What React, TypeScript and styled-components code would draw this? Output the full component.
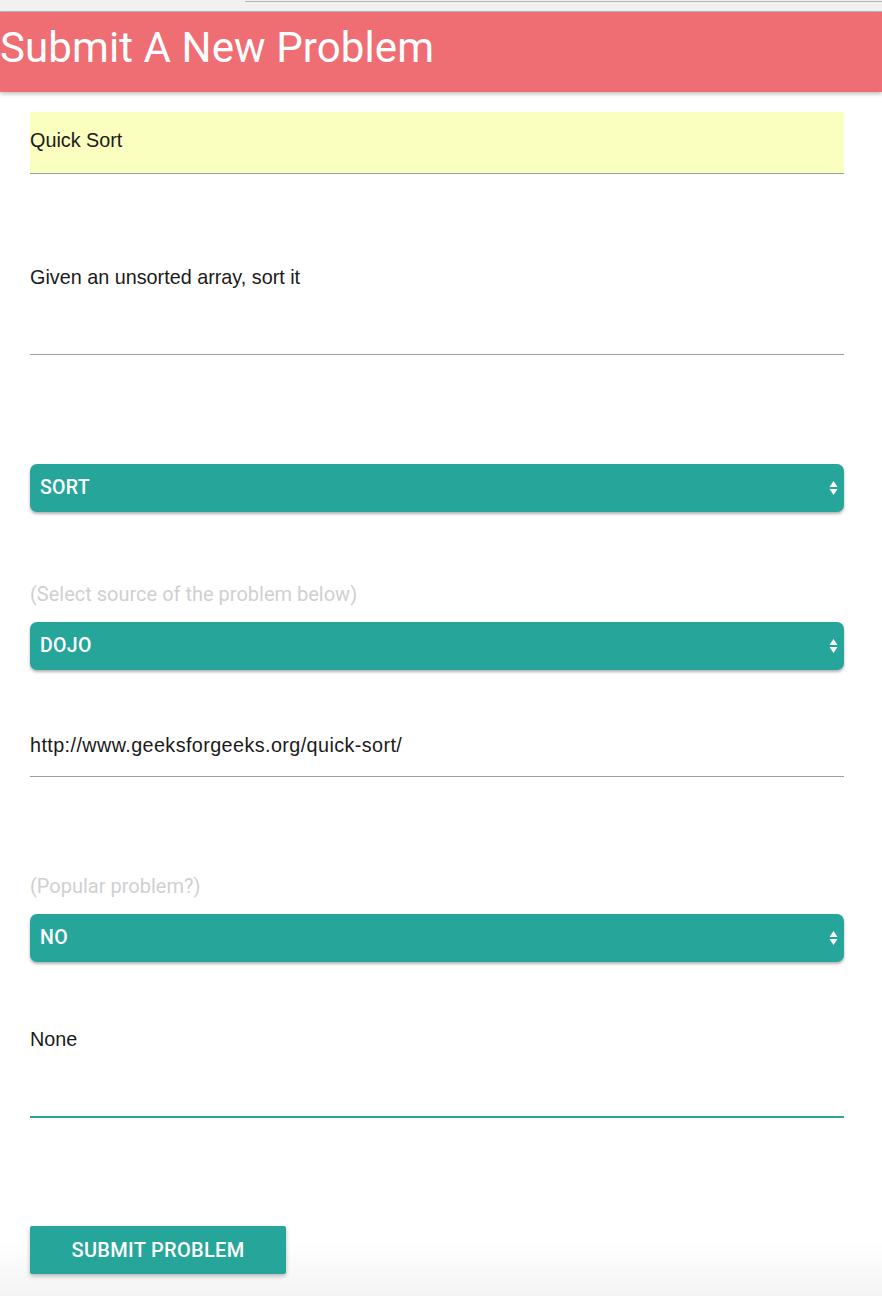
import styled, { createGlobalStyle } from "styled-components";

const GlobalStyle = createGlobalStyle`
	html, body {
		margin: 0;
		padding: 0;
		background: #ffffff;
	}
	body {
		font-family: Roboto, "Liberation Sans", sans-serif;
	}
`;

const Page = styled.div`
	width: 882px;
	min-height: 1296px;
	box-sizing: border-box;
	background: linear-gradient(to bottom, #ffffff 0, #ffffff 1240px, #f4f4f4 1296px);
	overflow: hidden;
`;

const Chrome = styled.div`
	height: 10px;
	border-top: 1px solid transparent;
	border-bottom: 1px solid #b9b9b9;
	background-image: linear-gradient(to right, transparent 245px, #b4b4b4 245px);
	background-size: 100% 1px;
	background-repeat: no-repeat;
	background-color: #f1f1f1;
`;

const Header = styled.header`
	height: 80px;
	background: #ef6e73;
	box-shadow: 0 2px 4px rgba(0, 0, 0, 0.25);
	display: flex;
	align-items: center;
	position: relative;
	z-index: 1;
	h1 {
		margin: 0;
		padding-bottom: 10px;
		color: #ffffff;
		font-family: Roboto, sans-serif;
		font-weight: 400;
		font-size: 42px;
		letter-spacing: 0.1px;
	}
`;

const Form = styled.form`
	padding: 20px 38px 0 30px;
	display: flex;
	flex-direction: column;
`;

const TextField = styled.div<{ $bg?: string; $active?: boolean; $height: number }>`
	height: ${(p) => p.$height}px;
	box-sizing: border-box;
	background: ${(p) => p.$bg || "transparent"};
	border-bottom: ${(p) => (p.$active ? "2px solid #26a69a" : "1px solid #9e9e9e")};
	color: #1a1a1a;
	font-family: "Liberation Sans", Arial, sans-serif;
	font-size: 19.8px;
	line-height: 24px;
	display: flex;
	align-items: flex-start;
`;

const Value = styled.span<{ $top: number; $spacing?: number }>`
	padding-top: ${(p) => p.$top}px;
	letter-spacing: ${(p) => p.$spacing || 0}px;
`;

const Spacer = styled.div<{ $h: number }>`
	height: ${(p) => p.$h}px;
`;

const Hint = styled.div`
	color: #d0d0d0;
	font-family: Roboto, sans-serif;
	font-size: 20px;
	height: 22px;
	line-height: 22px;
`;

const Select = styled.div`
	height: 48px;
	border-radius: 7px;
	background: #26a69a;
	box-shadow: 0 2px 3px rgba(0, 0, 0, 0.3);
	display: flex;
	align-items: center;
	justify-content: space-between;
	padding: 0 6px 0 10px;
	color: #ffffff;
	font-family: Roboto, sans-serif;
	font-weight: 500;
	font-size: 19.5px;
	letter-spacing: 0.3px;
	span {
		padding-bottom: 2px;
	}
`;

const Arrows = styled.svg`
	width: 9px;
	height: 18px;
`;

const SubmitButton = styled.button`
	width: 256px;
	height: 48px;
	border: none;
	border-radius: 2px;
	background: #26a69a;
	color: #ffffff;
	font-family: Roboto, sans-serif;
	font-weight: 500;
	font-size: 20px;
	letter-spacing: 0.3px;
	text-transform: uppercase;
	box-shadow: 0 2px 4px rgba(0, 0, 0, 0.28);
	padding: 0;
`;

function Dropdown(props: { value: string }) {
	return (
		<Select>
			<span>{props.value}</span>
			<Arrows viewBox="0 0 9 18">
				<path d="M4.5 2 L8.5 8 L0.5 8 Z" fill="#ffffff" />
				<path d="M0.5 10 L8.5 10 L4.5 16 Z" fill="#ffffff" />
			</Arrows>
		</Select>
	);
}

export default function App() {
	return (
		<Page>
			<GlobalStyle />
			<Chrome />
			<Header>
				<h1>Submit A New Problem</h1>
			</Header>
			<Form>
				<TextField $height={62} $bg="#fafebf">
					<Value $top={16}>Quick Sort</Value>
				</TextField>
				<Spacer $h={89} />
				<TextField $height={92}>
					<Value $top={2}>Given an unsorted array, sort it</Value>
				</TextField>
				<Spacer $h={109} />
				<Dropdown value="SORT" />
				<Spacer $h={71} />
				<Hint>(Select source of the problem below)</Hint>
				<Spacer $h={17} />
				<Dropdown value="DOJO" />
				<Spacer $h={54} />
				<TextField $height={53}>
					<Value $top={9} $spacing={0.4}>
						http://www.geeksforgeeks.org/quick-sort/
					</Value>
				</TextField>
				<Spacer $h={98} />
				<Hint>(Popular problem?)</Hint>
				<Spacer $h={17} />
				<Dropdown value="NO" />
				<Spacer $h={56} />
				<TextField $height={100} $active>
					<Value $top={9}>None</Value>
				</TextField>
				<Spacer $h={108} />
				<div>
					<SubmitButton type="button">Submit Problem</SubmitButton>
				</div>
			</Form>
		</Page>
	);
}
